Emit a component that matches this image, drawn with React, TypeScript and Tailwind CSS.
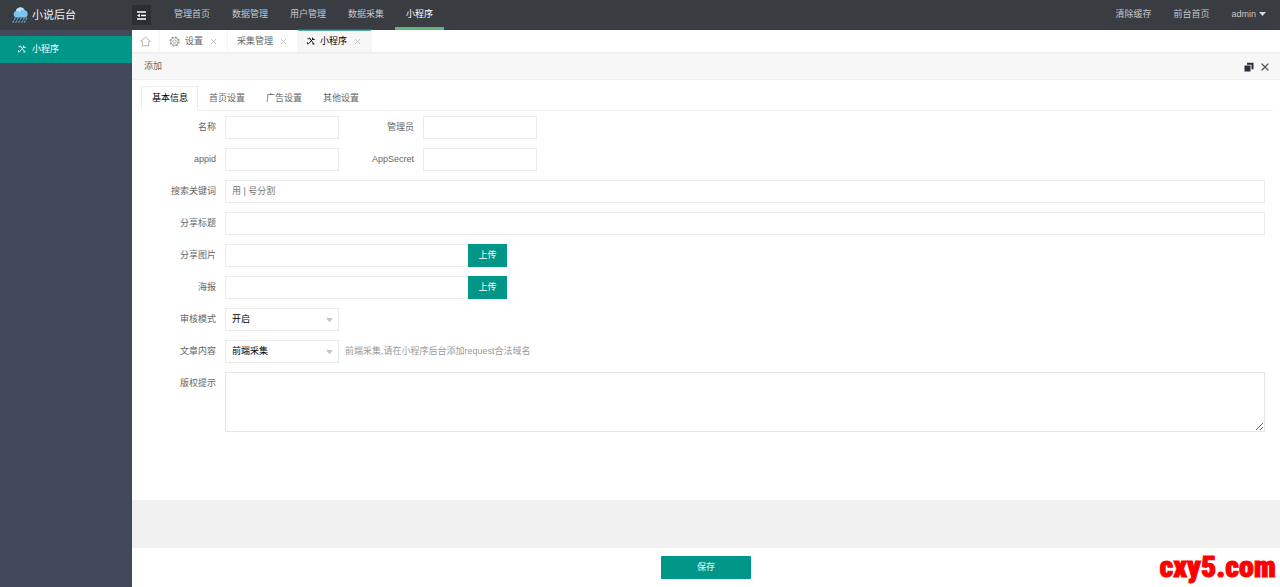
import { useState, type ReactNode } from "react";
import { X } from "lucide-react";

const topLinks = ["管理首页", "数据管理", "用户管理", "数据采集", "小程序"];
const sections = ["基本信息", "首页设置", "广告设置", "其他设置"];
const field = "h-[23px] border border-[#ebebeb] bg-white px-1.5 pb-0.5 text-[#666] outline-none placeholder:text-[#757575]";
const uploadButton = "h-[23px] w-[39px] bg-[#009688] pb-0.5 text-white";

function CloudLogo() {
  return (
    <svg width="18" height="18" viewBox="0 0 18 18" aria-hidden="true">
      <path d="M4.500 11.500a3.300 3.300 0 0 1-.6-6.400A4.600 4.600 0 0 1 12.700 4a4 4 0 0 1 .8 7.500z" fill="#7cc5ee" />
      <path d="M4 5.100A4.600 4.600 0 0 1 12.600 4c-3-.6-4.500.4-5.200 2.200C6.300 5.300 5.200 4.900 4 5.100z" fill="#b5e3fa" />
      <path
        d="M3.500 11.500l-3 5.500M6.500 11.500l-3 5.500M9.500 11.500l-3 5.500M12.500 11.500l-3 5.500M15 11.500l-3 5.500"
        stroke="#64a3c8"
        strokeWidth="1.200"
        strokeDasharray="2.600 0.800"
      />
    </svg>
  );
}

function ToolsIcon() {
  return (
    <svg width="8" height="8" viewBox="0 0 16 16" fill="none" stroke="currentColor" strokeWidth="1.700" aria-hidden="true">
      <path d="M1 3.500h4.500M4.500 1l9 13M2 14.500L12.500 3" />
      <path d="M11 1v4h4.500M10.500 14h4.500M1 10.500v4" />
    </svg>
  );
}

function HomeIcon() {
  return (
    <svg width="11" height="11" viewBox="0 0 22 22" fill="none" stroke="currentColor" strokeWidth="1.800" aria-hidden="true">
      <path d="M1.500 10.500L11 2l9.500 8.500H17.500V19.500h-13v-9z" />
    </svg>
  );
}

function GearIcon() {
  return (
    <svg width="11" height="11" viewBox="0 0 22 22" fill="none" stroke="#999" aria-hidden="true">
      <circle cx="11" cy="11" r="9" strokeWidth="2.600" strokeDasharray="4 3.070" />
      <circle cx="11" cy="11" r="7.400" strokeWidth="1.600" />
      <circle cx="11" cy="11" r="3.400" strokeWidth="1.600" />
    </svg>
  );
}

function Caret({ className }: { className: string }) {
  return (
    <svg width="7" height="4" viewBox="0 0 7 4" className={className} aria-hidden="true">
      <path d="M0 0h7L3.500 4z" fill="currentColor" />
    </svg>
  );
}

function Row({ label, id, children }: { label: string; id: string; children: ReactNode }) {
  return (
    <div className="flex">
      <label htmlFor={id} className="mr-[9px] w-[75px] shrink-0 text-right leading-[23px]">
        {label}
      </label>
      {children}
    </div>
  );
}

function Picker({ id, options }: { id: string; options: string[] }) {
  return (
    <div className="relative w-[114px]">
      <select id={id} className={`${field} w-full appearance-none text-black`}>
        {options.map((o) => (
          <option key={o}>{o}</option>
        ))}
      </select>
      <Caret className="pointer-events-none absolute top-[10px] right-[6px] text-[#c2c2c2]" />
    </div>
  );
}

function PageTab({ label, icon, active }: { label: string; icon?: ReactNode; active?: boolean }) {
  return (
    <div
      className={`flex items-center border-r border-[#f4f4f4] px-[9px] ${
        active ? "bg-[#f6f6f6] text-black shadow-[0_-1px_0_#2f6a6b,inset_0_1px_0_#4dada5]" : "text-[#666]"
      }`}
    >
      <button type="button" className="flex items-center gap-[5px]">
        {icon}
        {label}
      </button>
      <button type="button" aria-label={`关闭${label}`} className="ml-[6px] text-[#c2c2c2]">
        <X size={9} strokeWidth={2.500} />
      </button>
    </div>
  );
}

export default function App() {
  const [section, setSection] = useState(0);
  return (
    <div className="flex min-h-screen flex-col bg-white font-['Liberation_Sans','Noto_Sans_CJK_SC',sans-serif] text-[9px] leading-[14px] text-[#666]">
      <header className="flex h-[30px] items-stretch bg-[#393d41] text-[#c5c6c8]">
        <div className="flex w-[132px] items-center gap-0.5 pl-3 text-[11px] text-[#f0f0f0]">
          <CloudLogo />
          小说后台
        </div>
        <button type="button" aria-label="折叠菜单" className="my-[5px] flex w-[19px] items-center justify-center bg-[#2b2e33] text-white">
          <svg width="9" height="9" viewBox="0 0 9 9" fill="none" stroke="currentColor" aria-hidden="true">
            <path d="M0 1h9M4 4.500h5M0 8h9" strokeWidth="1.300" />
            <path d="M2.800 2.800v3.400L0 4.500z" fill="currentColor" stroke="none" />
          </svg>
        </button>
        <nav className="ml-3 flex">
          {topLinks.map((t, i) => (
            <a
              key={t}
              href="#"
              className={`border-b-[3px] px-[11px] pt-[7px] ${i === 4 ? "border-[#5fb878] text-white" : "border-transparent"}`}
            >
              {t}
            </a>
          ))}
        </nav>
        <nav className="ml-auto flex gap-[22px] pt-[7px] pr-[14px]">
          <a href="#">清除缓存</a>
          <a href="#">前台首页</a>
          <button type="button" className="flex h-[14px] items-center gap-[3px]">
            admin
            <Caret className="text-[#d8d8d8]" />
          </button>
        </nav>
      </header>

      <div className="flex flex-1">
        <aside className="w-[132px] shrink-0 bg-[#43485b] pt-[6px]">
          <a href="#" className="flex h-[27px] items-center gap-[6px] bg-[#009688] pb-[2px] pl-[18px] text-white">
            <ToolsIcon />
            小程序
          </a>
        </aside>

        <main className="flex min-w-0 flex-1 flex-col">
          <div className="flex h-[24px] border-b-2 border-[#efefef]">
            <button type="button" aria-label="首页" className="flex w-[28px] items-center justify-center border-r border-[#f4f4f4] text-[#aaa]">
              <HomeIcon />
            </button>
            <PageTab label="设置" icon={<GearIcon />} />
            <PageTab label="采集管理" />
            <PageTab label="小程序" icon={<ToolsIcon />} active />
          </div>

          <div className="flex h-[26px] items-center border-b border-[#eee] bg-[#f7f7f7] pr-[9px] pb-[2px] pl-3">
            <h1>添加</h1>
            <button type="button" aria-label="还原窗口" className="mt-0.5 ml-auto text-[#2e2d3c]">
              <svg width="10" height="10" viewBox="0 0 10 10" fill="currentColor" aria-hidden="true">
                <path d="M.5 3.500h6v6h-6zM3 .8h6.500v6.400H7.500V2.700H3z" />
              </svg>
            </button>
            <button type="button" aria-label="关闭" className="mt-0.5 ml-[5px] text-[#555]">
              <X size={12} strokeWidth={2.500} />
            </button>
          </div>

          <div className="mt-[6px] mr-[7px] ml-[9px] flex h-[25px] border-b border-[#eee]" role="tablist">
            {sections.map((s, i) => (
              <button
                key={s}
                type="button"
                role="tab"
                aria-selected={i === section}
                onClick={() => setSection(i)}
                className={`-mb-px border pr-[9px] pb-[2px] pl-[10px] ${
                  i === section ? "border-[#eee] border-b-white bg-white text-black" : "border-transparent"
                }`}
              >
                {s}
              </button>
            ))}
          </div>

          <form id="app-form" className="flex flex-1 flex-col gap-[9px] pt-[5px] pr-[15px] pb-[68px] pl-[9px]">
            <div className="flex">
              <Row label="名称" id="name">
                <input id="name" className={`${field} w-[114px]`} />
              </Row>
              <Row label="管理员" id="manager">
                <input id="manager" className={`${field} w-[114px]`} />
              </Row>
            </div>
            <div className="flex">
              <Row label="appid" id="appid">
                <input id="appid" className={`${field} w-[114px]`} />
              </Row>
              <Row label="AppSecret" id="secret">
                <input id="secret" className={`${field} w-[114px]`} />
              </Row>
            </div>
            <Row label="搜索关键词" id="keywords">
              <input id="keywords" placeholder="用 | 号分割" className={`${field} min-w-0 flex-1`} />
            </Row>
            <Row label="分享标题" id="share-title">
              <input id="share-title" className={`${field} min-w-0 flex-1`} />
            </Row>
            <Row label="分享图片" id="share-image">
              <input id="share-image" className={`${field} w-[243px] border-r-0`} />
              <button type="button" className={uploadButton}>上传</button>
            </Row>
            <Row label="海报" id="poster">
              <input id="poster" className={`${field} w-[243px] border-r-0`} />
              <button type="button" className={uploadButton}>上传</button>
            </Row>
            <Row label="审核模式" id="audit">
              <Picker id="audit" options={["开启", "关闭"]} />
            </Row>
            <Row label="文章内容" id="source">
              <Picker id="source" options={["前端采集", "后端采集"]} />
              <p className="ml-[6px] leading-[23px] text-[#999]">前端采集,请在小程序后台添加request合法域名</p>
            </Row>
            <Row label="版权提示" id="copyright">
              <textarea id="copyright" className="h-[60px] min-w-0 flex-1 resize border border-[#e6e6e6] p-1.5 outline-none" />
            </Row>
          </form>

          <div className="h-[48px] bg-[#f1f1f1]" />
          <footer className="relative flex h-[39px] items-center justify-center">
            <button type="submit" form="app-form" className="h-[23px] w-[90px] rounded-[1px] bg-[#009688] pb-0.5 text-white">
              保存
            </button>
            <span className="absolute right-1 bottom-[3px] font-[Impact,'Roboto_Condensed','Open_Sans_Condensed','Noto_Sans_Condensed',Roboto,sans-serif] text-[30px] leading-[34px] font-black text-[#f00] [-webkit-text-stroke:1px_#f00]">
              cxy5.com
            </span>
          </footer>
        </main>
      </div>
    </div>
  );
}
